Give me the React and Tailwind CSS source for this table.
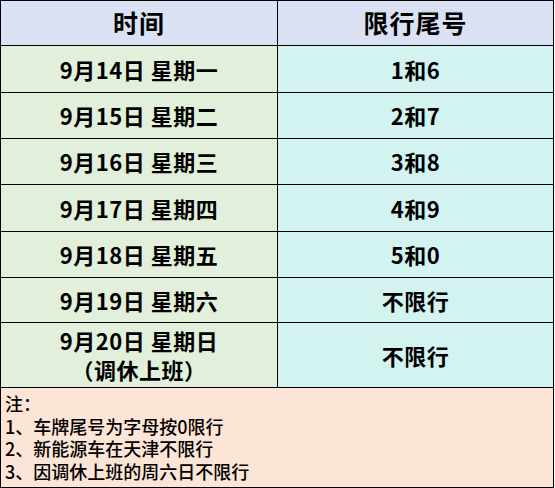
import React from "react";

const rows = [
  { date: "9月14日 星期一", plate: "1和6", h: "h-[47px]" },
  { date: "9月15日 星期二", plate: "2和7", h: "h-[46px]" },
  { date: "9月16日 星期三", plate: "3和8", h: "h-[46px]" },
  { date: "9月17日 星期四", plate: "4和9", h: "h-[47px]" },
  { date: "9月18日 星期五", plate: "5和0", h: "h-[46px]" },
  { date: "9月19日 星期六", plate: "不限行", h: "h-[45px]" },
];

const notes = [
  "注：",
  "1、车牌尾号为字母按0限行",
  "2、新能源车在天津不限行",
  "3、因调休上班的周六日不限行",
];

function App() {
  return (
    <div
      className="w-[555px] h-[488px] bg-white text-black overflow-hidden"
      style={{ fontFamily: '"Noto Sans CJK SC", "Noto Sans", sans-serif' }}
    >
      <div className="w-[554px] border-l border-t border-black">
        {/* header */}
        <div className="flex h-[45px] bg-[#d9e1f2] border-b border-black">
          <div className="w-[277px] border-r border-black flex items-center justify-center text-[25px] tracking-[1px] font-bold">
            时间
          </div>
          <div className="w-[276px] border-r border-black flex items-center justify-center text-[25px] tracking-[1px] font-bold">
            限行尾号
          </div>
        </div>

        {rows.map((r) => (
          <div key={r.date} className={`flex ${r.h} border-b border-black`}>
            <div className="w-[277px] bg-[#e2efda] border-r border-black flex items-center justify-center text-[22px] tracking-[0.5px] font-bold">
              {r.date}
            </div>
            <div className="w-[276px] bg-[#d3f3f0] border-r border-black flex items-center justify-center text-[22px] tracking-[0.5px] font-bold">
              {r.plate}
            </div>
          </div>
        ))}

        <div className="flex h-[65px] border-b border-black">
          <div className="w-[277px] bg-[#e2efda] border-r border-black flex flex-col items-center justify-center text-[22px] tracking-[0.5px] font-bold leading-[29px]">
            <span>9月20日 星期日</span>
            <span>（调休上班）</span>
          </div>
          <div className="w-[276px] bg-[#d3f3f0] border-r border-black flex items-center justify-center text-[22px] tracking-[0.5px] font-bold">
            不限行
          </div>
        </div>

        {/* notes */}
        <div className="h-[100px] bg-[#fce4d6] border-r border-b border-black pl-[4px] pt-[4px] text-[18px] font-medium leading-[22.5px]">
          {notes.map((n) => (
            <div key={n}>{n}</div>
          ))}
        </div>
      </div>
    </div>
  );
}

export default App;
